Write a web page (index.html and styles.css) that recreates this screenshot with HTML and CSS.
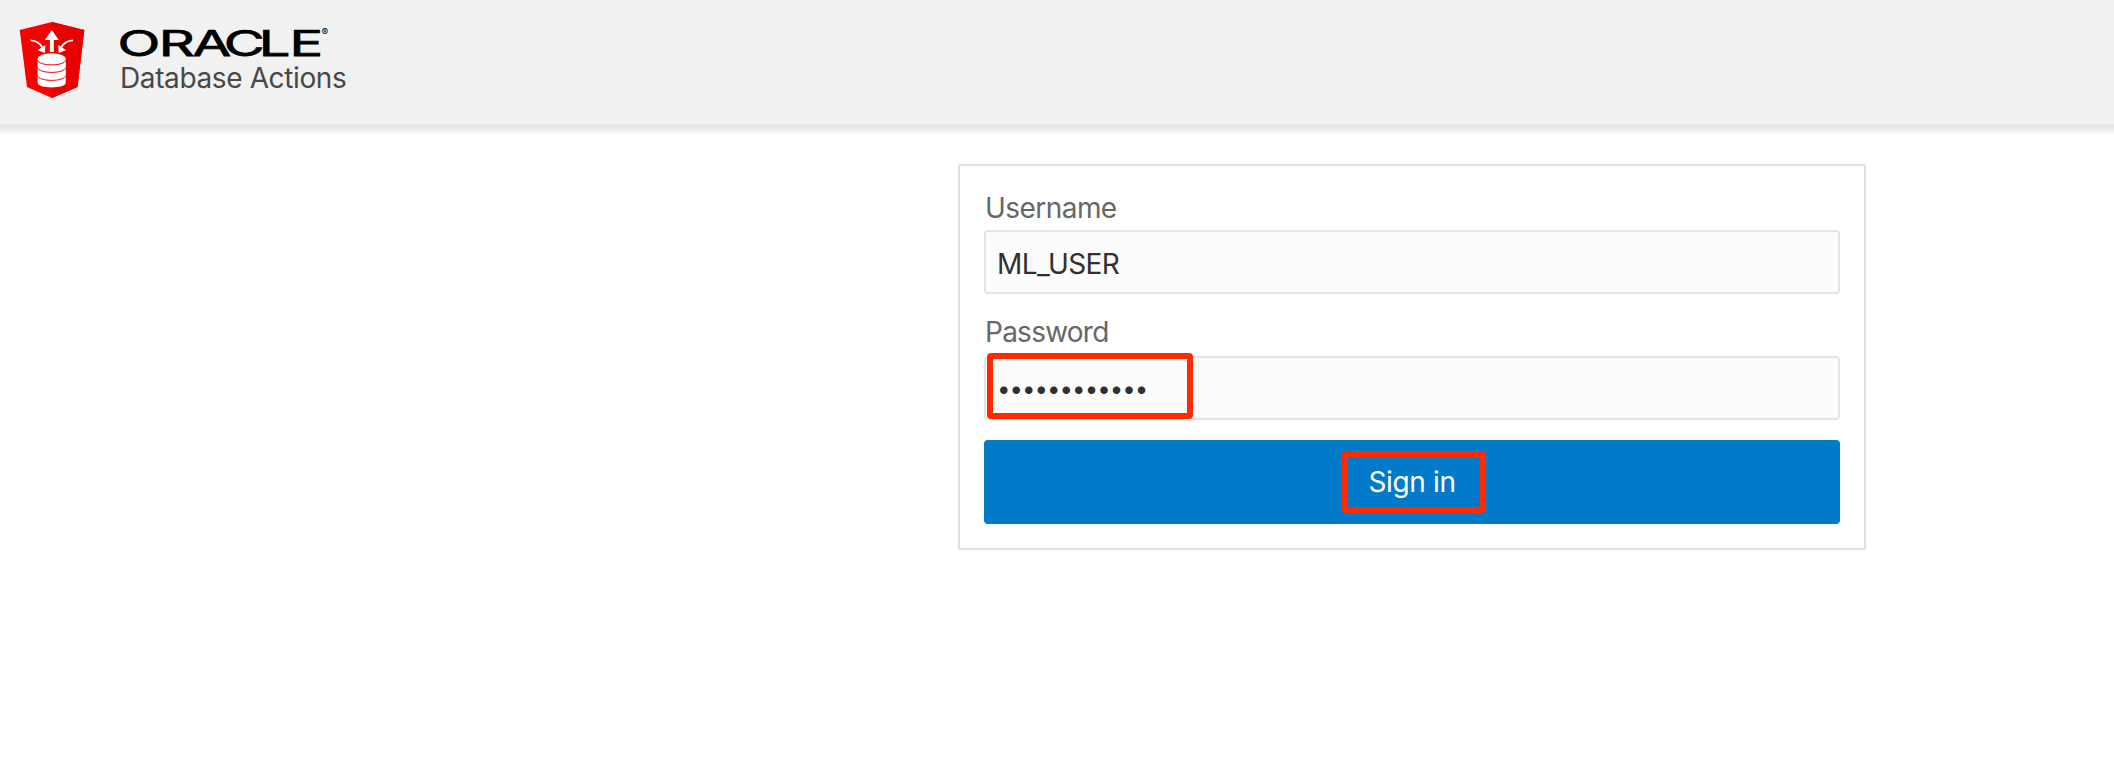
FILE: index.html
```html
<!DOCTYPE html>
<html lang="en">
<head>
<meta charset="utf-8">
<title>Database Actions</title>
<link rel="stylesheet" href="styles.css">
</head>
<body>
<header class="header">
  <svg class="shield" width="66" height="78" viewBox="19 21 66 78" aria-hidden="true">
    <path fill="#fb0000" d="M52 22 84.3 30 77.5 87 52 98 27 87 19.7 30Z"/>
    <path fill="#e80000" d="M52 22 84.3 30 77.5 87 52 98Z"/>
    <path fill="#fff" d="M51.8 30 58.8 40H53.8V52H49.9V40H44.8Z"/>
    <path fill="none" stroke="#fff" stroke-width="1.8" d="M30.5 40.4Q39 41 42.3 47.5M73 40.4Q64.5 41 61.2 47.5"/>
    <path fill="#fff" d="M45.3 45 45 53 37.5 50.2ZM58.3 45 58.6 53 66 50.2Z"/>
    <path fill="#fff" d="M37.6 59C37.6 51.7 65.8 51.7 65.8 59V82.5C65.8 89 37.6 89 37.6 82.5Z"/>
    <path fill="none" stroke="#f00000" stroke-width="1" d="M37.6 60C38.5 66.5 65 66.5 65.8 60M37.6 67.5C38.5 74 65 74 65.8 67.5M37.6 75.5C38.5 82 65 82 65.8 75.5"/>
  </svg>
  <div class="brand">
    <svg class="wordmark" width="212" height="32" viewBox="0 0 212 32">
      <text class="logo-text" transform="scale(1.6 1)" y="28.5" x="-1.6 24.2 45.3 64.8 86.8 106">ORACLE</text>
      <text class="registered" x="201.5" y="9">®</text>
    </svg>
    <div class="product">Database Actions</div>
  </div>
</header>
<main class="page">
  <form class="card">
    <label class="label">Username</label>
    <div class="field"><span class="user">ML_USER</span></div>
    <label class="label label-password">Password</label>
    <div class="field"><span class="dots">••••••••••••</span><span class="mark mark-password"></span></div>
    <button class="button" type="button"><span class="button-text">Sign in</span><span class="mark mark-signin"></span></button>
  </form>
</main>
</body>
</html>
```
FILE: styles.css
```css
* { box-sizing: border-box; }
body {
  margin: 0;
  height: 768px;
  overflow: hidden;
  background: #fff;
  font-family: Inter, "Liberation Sans", sans-serif;
  font-size: 28px;
  line-height: 34px;
}
.header {
  display: flex;
  gap: 35px;
  height: 124px;
  padding: 21px 0 0 19px;
  background: #f1f1f1;
}
.shield { flex: none; }
.brand { padding-top: 6px; }
.wordmark { display: block; overflow: visible; }
.logo-text {
  font-size: 35px;
  font-weight: 400;
  fill: #000;
  stroke: #000;
  stroke-width: 1px;
  vector-effect: non-scaling-stroke;
}
.registered { font-size: 10px; fill: #000; }
.product {
  margin-top: 2px;
  color: #484848;
  letter-spacing: -0.38px;
  white-space: nowrap;
}
.page {
  padding: 40px 0 0 958px;
  background: linear-gradient(#e3e3e3, #e9e9e9 4px, #fff 12px) top / 100% 12px no-repeat;
}
.card {
  display: flex;
  flex-direction: column;
  width: 908px;
  height: 386px;
  padding: 24px;
  border: 2px solid #e0e0e0;
  border-radius: 2px;
}
.label {
  height: 40px;
  padding: 1px 0 0 1px;
  color: #676767;
  letter-spacing: -0.55px;
}
.label-password { height: 42px; margin-top: 20px; letter-spacing: -0.75px; }
.field {
  position: relative;
  display: flex;
  align-items: center;
  height: 64px;
  padding: 4px 11px 0;
  border: 2px solid #e4e4e4;
  border-radius: 4px;
  background: #fcfcfc;
  color: #303030;
}
.user { letter-spacing: -0.6px; }
.dots { padding-bottom: 3px; font-size: 24px; letter-spacing: -0.98px; }
.button {
  position: relative;
  display: flex;
  align-items: center;
  justify-content: center;
  height: 84px;
  margin-top: 20px;
  padding: 0;
  border: 0;
  border-radius: 4px;
  background: #007ac9;
  color: #fff;
  font: inherit;
}
.button-text { letter-spacing: -0.35px; }
.mark {
  position: absolute;
  border: 6px solid #ff2a00;
  border-radius: 4px;
}
.mark-password { left: 1px; top: -5px; width: 206px; height: 66px; }
.mark-signin { left: 358px; top: 11px; width: 144px; height: 62px; }
```
